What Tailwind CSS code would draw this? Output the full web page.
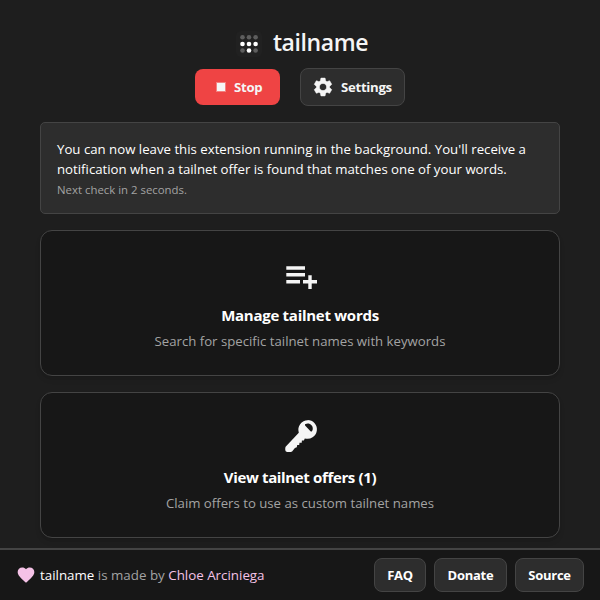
<!DOCTYPE html>
<html lang="en">
<head>
<meta charset="utf-8">
<title>tailname</title>
<script src="https://cdn.jsdelivr.net/npm/@tailwindcss/browser@4"></script>
</head>
<body class="w-[600px] h-[600px] overflow-hidden bg-[#1e1e1e] text-[#f5f5f5] font-['Open_Sans','Noto_Sans',sans-serif] flex flex-col text-[13.23px]">
<main class="h-[548px] px-10 flex flex-col shrink-0">
  <header class="h-[122px] shrink-0 pt-6 flex flex-col items-center">
    <div class="flex h-9 items-center gap-[10px] pl-[3px]">
      <svg class="mt-[3px]" width="28" height="28" viewBox="0 0 28 28"><rect x="1" y="1" width="26" height="26" rx="5" fill="#212121"/><g fill="#5e5e5e"><circle cx="7.5" cy="7.3" r="2.3"/><circle cx="14" cy="7.3" r="2.3"/><circle cx="20.6" cy="7.3" r="2.3"/><circle cx="7.5" cy="20.5" r="2.3"/><circle cx="20.6" cy="20.5" r="2.3"/></g><g fill="#fff"><circle cx="7.5" cy="14" r="2.3"/><circle cx="14" cy="14" r="2.3"/><circle cx="20.6" cy="14" r="2.3"/><circle cx="14" cy="20.5" r="2.3"/></g></svg>
      <h1 class="text-[23px] font-semibold tracking-[-0.4px] leading-9 whitespace-nowrap">tailname</h1>
    </div>
    <div class="mt-2 flex items-center gap-5 text-[13.2px] tracking-[-0.3px]">
      <button class="w-[85px] h-9 rounded-lg bg-[#ef4444] flex items-center pl-[21px] gap-2 font-bold"><span class="size-[10px] bg-[#f5f5f5] border border-[#f3807f]"></span><span class="pt-px">Stop</span></button>
      <button class="w-[105px] h-[38px] rounded-lg bg-[#2d2d2d] border border-[#444] flex items-center pl-3 gap-2 font-bold"><svg width="20" height="20" viewBox="1.200 1.200 21.600 21.600" fill="#f5f5f5" stroke="#f5f5f5" stroke-width=".6" stroke-linejoin="round"><path d="M19.14 12.94c.04-.3.06-.61.06-.94 0-.32-.02-.64-.07-.94l2.03-1.58c.18-.14.23-.41.12-.61l-1.92-3.32c-.12-.22-.37-.29-.59-.22l-2.39.96c-.5-.38-1.03-.7-1.62-.94l-.36-2.54c-.04-.24-.24-.41-.48-.41h-3.84c-.24 0-.43.17-.47.41l-.36 2.54c-.59.24-1.13.57-1.62.94l-2.39-.96c-.22-.08-.47 0-.59.22L2.74 8.87c-.12.21-.08.47.12.61l2.03 1.58c-.05.3-.09.63-.09.94s.02.64.07.94l-2.03 1.58c-.18.14-.23.41-.12.61l1.920 3.320c.12.22.37.29.59.22l2.390-.96c.5.38 1.030.7 1.620.94l.36 2.540c.05.24.24.41.48.41h3.840c.24 0 .44-.17.47-.41l.36-2.540c.59-.24 1.130-.56 1.620-.94l2.390.96c.22.08.47 0 .59-.22l1.920-3.320c.12-.22.07-.47-.12-.61l-2.010-1.580zM12 15.900c-2.150 0-3.900-1.750-3.900-3.900s1.750-3.900 3.900-3.900 3.900 1.750 3.900 3.900-1.750 3.900-3.900 3.900z"/></svg><span class="pt-px">Settings</span></button>
    </div>
  </header>
  <section class="h-[92px] shrink-0 rounded-[5px] bg-[#2d2d2d] border border-[#444] px-4 pt-4 whitespace-nowrap text-white">
    <p class="leading-5">You can now leave this extension running in the background. You'll receive a</p>
    <p class="leading-5">notification when a tailnet offer is found that matches one of your words.</p>
    <p class="text-[11.4px] leading-[21px] text-[#a3a3a3]">Next check in 2 seconds.</p>
  </section>
  <section class="mt-4 h-[146px] shrink-0 rounded-xl bg-[#171717] border border-[#444] shadow-md flex flex-col items-center pt-[25px]">
    <svg width="40" height="40" viewBox="0 0 40 40" fill="#f5f5f5"><path d="M6.3 10.3H25v3.4H6.3zM6.3 17H25v3.4H6.3zM6.3 24H20v3.4H6.3zM28.3 19.2h3.4v4.9H37v3.3h-5.3V33h-3.4v-5.600H23v-3.300h5.300z"/></svg>
    <h2 class="mt-[7px] leading-6 text-[15px] tracking-[-0.27px] font-bold text-white">Manage tailnet words</h2>
    <p class="mt-1 leading-5 text-[13.2px] text-[#a3a3a3]">Search for specific tailnet names with keywords</p>
  </section>
  <section class="mt-4 h-[146px] shrink-0 rounded-xl bg-[#171717] border border-[#444] shadow-md flex flex-col items-center pt-[25px]">
    <svg width="40" height="40" viewBox="0 0 40 40" fill="#f5f5f5"><path fill-rule="evenodd" d="M27.500 2a9.400 9.400 0 1 1-2.700 18.400l-.9 2.200-2-.1-.2 2.300-2.200-.1-.3 2.400-2-.1-.4 2.300-1.900.6-2.800 3.500c-1.500.9-4.500.8-6.200.1-.9-1.200-.8-3.600-.3-4.800l13.200-14a9.400 9.400 0 0 1 9.100-12.400zM25.500 6.100c2-1.100 4.600-.5 6 1.100 1.500 1.600 1.700 4 .6 5.900-.4.700-1.100.6-1.600.1l-5.200-5.400c-.5-.6-.5-1.300.2-1.700z"/></svg>
    <h2 class="mt-[7px] leading-6 text-[15px] tracking-[-0.35px] font-bold text-white">View tailnet offers (1)</h2>
    <p class="mt-1 leading-5 text-[13.2px] text-[#a3a3a3]">Claim offers to use as custom tailnet names</p>
  </section>
</main>
<footer class="h-[52px] shrink-0 bg-[#171717] border-t-2 border-[#444] pl-4 pr-4 flex items-center justify-between">
  <div class="flex items-center gap-1 whitespace-nowrap">
    <svg width="20" height="20" viewBox="0 0 24 24" fill="#f5c2e7"><path d="m12 21.350-1.450-1.320C5.400 15.360 2 12.280 2 8.500 2 5.420 4.420 3 7.500 3c1.740 0 3.410.81 4.500 2.090C13.090 3.810 14.760 3 16.500 3 19.580 3 22 5.420 22 8.500c0 3.780-3.400 6.860-8.550 11.540L12 21.350z"/></svg>
    <p class="text-[#a3a3a3] leading-5 text-[13.35px]"><span class="text-white">tailname</span> is made by <span class="text-[#f5c2e7]">Chloe Arciniega</span></p>
  </div>
  <nav class="flex gap-2 font-bold text-[13px] tracking-[-0.25px] text-white">
    <button class="w-[52px] h-[34px] pt-px rounded-lg bg-[#2d2d2d] border border-[#444]">FAQ</button>
    <button class="w-[73px] h-[34px] pt-px rounded-lg bg-[#2d2d2d] border border-[#444]">Donate</button>
    <button class="w-[69px] h-[34px] pt-px rounded-lg bg-[#2d2d2d] border border-[#444]">Source</button>
  </nav>
</footer>
</body>
</html>
